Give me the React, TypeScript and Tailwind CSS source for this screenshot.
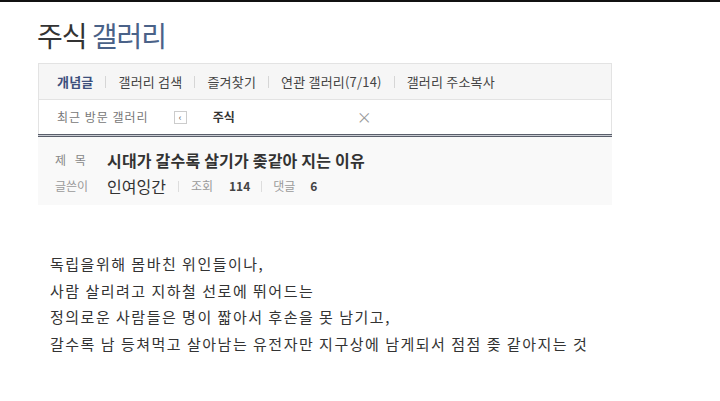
const font = { fontFamily: '"Noto Sans CJK KR", "Noto Sans", sans-serif' };

function Sep() {
  return <span className="mx-[12px] h-[12px] w-px bg-[#d6d6d6]" />;
}

export default function App() {
  const navItems = ["갤러리 검색", "즐겨찾기", "연관 갤러리(7/14)", "갤러리 주소복사"];
  return (
    <div className="h-[401px] w-[720px] overflow-hidden bg-white" style={font}>
      <div className="h-[2px] bg-[#111]" />
      <div className="pl-[37px] pt-[13px]">
        <h1 className="text-[28px] leading-[40px] tracking-[-1px] text-[#333]">
          주식 <span className="text-[#4a6288]">갤러리</span>
        </h1>
      </div>

      <div className="ml-[38px] mt-[8px] w-[574px]">
        <div className="flex h-[37px] items-center border border-[#e3e3e3] bg-[#f6f6f6] pl-[18px] text-[13px] tracking-[0.2px] text-[#444]">
          <span className="font-bold text-[#3d4f7c]">개념글</span>
          {navItems.map((item) => (
            <span key={item} className="flex items-center">
              <Sep />
              <span>{item}</span>
            </span>
          ))}
        </div>
        <div className="flex h-[34px] items-center border-x border-[#e3e3e3] bg-white pl-[18px] text-[12px] text-[#777]">
          <span className="tracking-[1px]">최근 방문 갤러리</span>
          <span className="ml-[25px] flex h-[13px] w-[13px] items-center justify-center border border-[#ccc] text-[9px] leading-none text-[#555]">
            ‹
          </span>
          <span className="ml-[26px] font-bold text-[#333]">주식</span>
          <span className="ml-[122px] text-[15px] text-[#999]">×</span>
        </div>
        <div className="h-[3px] border-y border-[#5a5f6b] bg-[#c9ccd2]" />
        <div className="bg-[#f9f9f9] pb-[6px] pl-[17px] pt-[10px]">
          <div className="flex h-[26px] items-center">
            <span className="w-[52px] text-[12px] tracking-[3px] text-[#888]">제 목</span>
            <span className="text-[16px] font-bold tracking-[0.2px] text-[#333]">
              시대가 갈수록 살기가 좆같아 지는 이유
            </span>
          </div>
          <div className="flex h-[26px] items-center text-[12px] text-[#999]">
            <span className="w-[52px]">글쓴이</span>
            <span className="text-[16px] text-[#333]">인여잉간</span>
            <span className="mx-[12px] h-[11px] w-px bg-[#ddd]" />
            <span>조회</span>
            <span className="ml-[16px] font-bold text-[#444]">114</span>
            <span className="mx-[11px] h-[11px] w-px bg-[#ddd]" />
            <span>댓글</span>
            <span className="ml-[15px] font-bold text-[#444]">6</span>
          </div>
        </div>
      </div>

      <div className="ml-[50px] mt-[46px] text-[15px] leading-[26.7px] tracking-[1.5px] text-[#333]">
        <p>독립을위해 몸바친 위인들이나,</p>
        <p>사람 살리려고 지하철 선로에 뛰어드는</p>
        <p>정의로운 사람들은 명이 짧아서 후손을 못 남기고,</p>
        <p>갈수록 남 등쳐먹고 살아남는 유전자만 지구상에 남게되서 점점 좆 같아지는 것</p>
      </div>
    </div>
  );
}
